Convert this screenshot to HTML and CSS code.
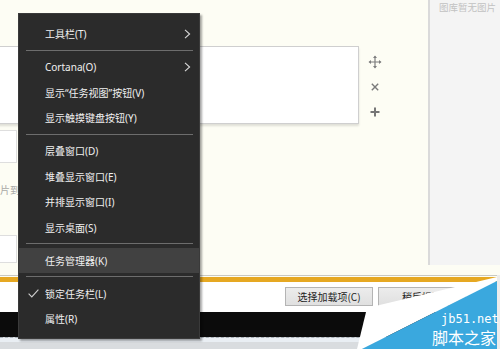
FILE: index.html
```html
<!DOCTYPE html>
<html lang="zh-CN">
<head>
<meta charset="utf-8">
<title>任务栏菜单</title>
<link rel="stylesheet" href="styles.css">
</head>
<body>
<div class="app">
  <div class="main">
    <div class="content">
      <div class="editor-row">
        <div class="editor"></div>
        <div class="tools">
          <svg class="ico" width="14" height="14" viewBox="0 0 14 14"><path d="M7 1.5V12.5M1.5 7H12.5" stroke="#7d7d7d" stroke-width="1.2" fill="none"/><path d="M7 0.5L5 3H9Z M7 13.5L5 11H9Z M0.5 7L3 5V9Z M13.5 7L11 5V9Z" fill="#7d7d7d"/></svg>
          <svg class="ico" width="14" height="14" viewBox="0 0 14 14"><path d="M3.8 3.8L10.2 10.2M10.2 3.8L3.8 10.2" stroke="#7a7a7a" stroke-width="1.4" fill="none"/></svg>
          <svg class="ico" width="14" height="14" viewBox="0 0 14 14"><path d="M7 2.5V11.5M2.5 7H11.5" stroke="#767676" stroke-width="2" fill="none"/></svg>
        </div>
      </div>
      <div class="field f1"></div>
      <div class="hint">拖动图片到此处</div>
      <div class="field f2"></div>
    </div>
    <aside class="gallery"><span class="gallery-text">图库暂无图片</span></aside>
  </div>
  <div class="accent"></div>
  <div class="footer">
    <button class="btn">选择加载项(C)</button>
    <button class="btn">稍后提醒</button>
  </div>
  <div class="blackbar"></div>
  <div class="taskstrip"></div>
</div>

<div class="menu">
  <div class="item">工具栏(T)<svg class="chev" width="7" height="10" viewBox="0 0 7 10"><path d="M1 0.8L5.6 5L1 9.2" stroke="#d8d8d8" stroke-width="1.1" fill="none"/></svg></div>
  <div class="sep"></div>
  <div class="item">Cortana(O)<svg class="chev" width="7" height="10" viewBox="0 0 7 10"><path d="M1 0.8L5.6 5L1 9.2" stroke="#d8d8d8" stroke-width="1.1" fill="none"/></svg></div>
  <div class="item">显示“任务视图”按钮(V)</div>
  <div class="item">显示触摸键盘按钮(Y)</div>
  <div class="sep"></div>
  <div class="item">层叠窗口(D)</div>
  <div class="item">堆叠显示窗口(E)</div>
  <div class="item">并排显示窗口(I)</div>
  <div class="item">显示桌面(S)</div>
  <div class="sep"></div>
  <div class="item active">任务管理器(K)</div>
  <div class="sep"></div>
  <div class="item"><svg class="check" width="11" height="9" viewBox="0 0 11 9"><path d="M0.6 4.6L3.8 7.9L10.4 0.6" stroke="#cfcfcf" stroke-width="1.1" fill="none"/></svg>锁定任务栏(L)</div>
  <div class="item">属性(R)</div>
</div>

<svg class="watermark" width="145" height="74" viewBox="355 275 145 74">
  <rect x="497" y="275" width="3" height="74" fill="#ececec"/>
  <polygon points="367,308 497,277 497,281 362,349 357,349" fill="#ffffff"/>
  <polygon points="497,281 497,349 362,349" fill="#3aa8de"/>
  <text x="441" y="323" class="wm-url">jb51.net</text>
  <text x="432" y="344" class="wm-name">脚本之家</text>
</svg>
</body>
</html>
```

FILE: styles.css
```css
html, body {
  margin: 0;
  padding: 0;
}
body {
  width: 500px;
  height: 349px;
  overflow: hidden;
  position: relative;
  background: #fdfdf5;
  font-family: "Noto Sans", "Noto Sans CJK SC", sans-serif;
}
.app {
  display: flex;
  flex-direction: column;
  width: 500px;
  height: 349px;
}
.main {
  display: flex;
  height: 275px;
  background: #fdfdf4;
}
.content {
  width: 428px;
  overflow: hidden;
  display: flex;
  flex-direction: column;
}
.editor-row {
  display: flex;
  margin-top: 46px;
}
.editor {
  width: 359px;
  height: 76px;
  margin-left: -2px;
  background: #ffffff;
  border: 1px solid #cfcfcf;
  box-shadow: 0 2px 2px rgba(0, 0, 0, 0.12);
}
.tools {
  display: flex;
  flex-direction: column;
  gap: 11px;
  padding-top: 9px;
  margin-left: 9px;
}
.ico {
  display: block;
}
.field {
  width: 16px;
  margin-left: -1px;
  background: #ffffff;
  border: 1px solid #dedede;
}
.f1 {
  margin-top: 6px;
  height: 31px;
}
.f2 {
  margin-top: 39px;
  height: 26px;
}
.hint {
  margin-top: 21px;
  margin-left: -30px;
  font-family: "Noto Sans CJK SC", sans-serif;
  font-size: 10px;
  line-height: 12px;
  color: #a9a9a6;
  white-space: nowrap;
}
.gallery {
  width: 61px;
  height: 263px;
  padding: 2px 0 0 9px;
  background: #f4f4f4;
  border-left: 2px solid #dadada;
  font-family: "Noto Sans CJK SC", sans-serif;
  font-size: 9.5px;
  line-height: 10px;
  color: #c2c2c2;
  white-space: nowrap;
}
.gallery-text {
  display: block;
}
.accent {
  height: 6px;
  border-top: 1px solid #c9c9c2;
  box-shadow: inset 0 1px 0 #fdfdf4;
  background: #e6a822;
  margin-right: 3px;
}
.footer {
  height: 30px;
  display: flex;
  align-items: flex-start;
  gap: 5px;
  padding-left: 285px;
  padding-top: 5px;
  box-sizing: border-box;
  background: #ffffff;
}
.btn {
  width: 88px;
  height: 19px;
  padding: 0;
  margin: 0;
  background: linear-gradient(#ececec, #e0e0e0);
  border: 1px solid #b4b4b4;
  font-family: "Noto Sans CJK SC", sans-serif;
  font-size: 10px;
  line-height: 17px;
  color: #1e1e1e;
}
.blackbar {
  height: 25px;
  background: #0b0b0b;
}
.taskstrip {
  flex: 1;
  background: linear-gradient(#e9eef3 0, #e9eef3 4px, #d9dcdf 4px);
  border-top: 1px dashed #a8b0b8;
}

.menu {
  position: absolute;
  left: 18px;
  top: 13px;
  width: 180px;
  padding: 7px 0 6px;
  background: #2b2b2b;
  border: 1px solid #3a3a3a;
  box-shadow: 2px 2px 2px rgba(0, 0, 0, 0.35);
  font-family: "Noto Sans", "Noto Sans CJK SC", sans-serif;
  font-size: 10px;
  color: #f0f0f0;
}
.item {
  position: relative;
  display: flex;
  align-items: center;
  height: 25.5px;
  padding-left: 26px;
  white-space: nowrap;
}
.item.active {
  background: #414141;
}
.chev {
  position: absolute;
  right: 8px;
  top: 8px;
}
.check {
  position: absolute;
  left: 9px;
  top: 8px;
}
.sep {
  height: 7.5px;
  margin: 0 6px 0 7px;
  background: linear-gradient(transparent 3px, #6d6d6d 3px, #6d6d6d 4px, transparent 4px);
}
.watermark {
  position: absolute;
  left: 355px;
  top: 275px;
}
.wm-url {
  font-family: "DejaVu Sans Mono", monospace;
  font-size: 12px;
  fill: #ffffff;
}
.wm-name {
  font-family: "Noto Sans CJK SC", sans-serif;
  font-size: 16px;
  fill: #ffffff;
}
```
